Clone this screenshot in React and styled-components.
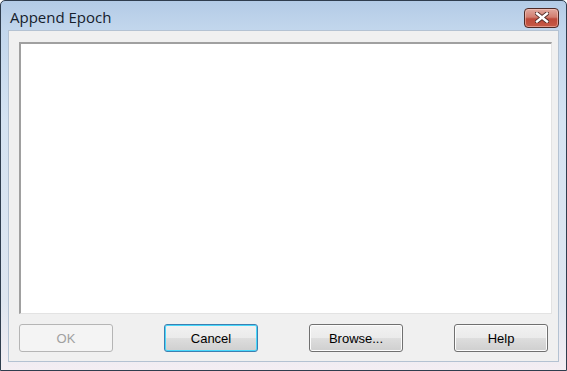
import React from "react";
import styled, { createGlobalStyle } from "styled-components";

const GlobalStyle = createGlobalStyle`
  html, body {
    margin: 0;
    padding: 0;
    background: #ffffff;
  }
`;

const Window = styled.div`
  box-sizing: border-box;
  width: 567px;
  height: 371px;
  display: flex;
  flex-direction: column;
  border: 1px solid #2f3d4e;
  border-radius: 5px 5px 0 0;
  background: linear-gradient(to bottom, #b3cbe6 0px, #c3d7ed 30px, #d5e3f2 120px, #dee6f0 300px, #f4eef3 371px);
  overflow: hidden;
`;

const TitleBar = styled.div`
  height: 29px;
  display: flex;
  align-items: center;
  justify-content: space-between;
  padding: 0 7px 0 9px;
`;

const Title = styled.span`
  font-family: "Open Sans", "Noto Sans", sans-serif;
  font-size: 15px;
  color: #15202c;
  margin-top: 2px;
`;

const CloseButton = styled.div`
  box-sizing: border-box;
  width: 35px;
  height: 20px;
  margin-top: 4px;
  border: 1px solid #4e2a26;
  border-radius: 4px;
  background: linear-gradient(to bottom, #e0a89e 0%, #d27e70 45%, #bd4a3a 55%, #c65a46 100%);
  box-shadow: inset 0 0 0 1px rgba(255, 210, 200, 0.5);
  display: flex;
  align-items: center;
  justify-content: center;
`;

const Client = styled.div`
  flex: 1;
  margin: 0 7px 8px 7px;
  background: #f0f0f0;
  border: 1px solid #b4c2d2;
  display: flex;
  flex-direction: column;
  padding: 11px 6px 0 10px;
`;

const Well = styled.div`
  box-sizing: border-box;
  height: 272px;
  background: #ffffff;
  border-top: 2px solid #a0a0a0;
  border-left: 2px solid #a0a0a0;
  border-right: 1px solid #e3e3e3;
  border-bottom: 1px solid #e3e3e3;
`;

const ButtonRow = styled.div`
  display: flex;
  justify-content: space-between;
  margin-top: 10px;
  padding-right: 4px;
`;

const Button = styled.button`
  box-sizing: border-box;
  width: 94px;
  height: 28px;
  border-radius: 3px;
  border: 1px solid ${(p) => (p.$default ? "#3c7fb1" : p.disabled ? "#b5b5b5" : "#707070")};
  background: ${(p) =>
    p.disabled
      ? "#f4f4f4"
      : "linear-gradient(to bottom, #f2f2f2 0%, #ebebeb 48%, #dddddd 52%, #cfcfcf 100%)"};
  box-shadow: ${(p) =>
    p.$default
      ? "inset 0 0 0 1px #48d8fb"
      : p.disabled
      ? "none"
      : "inset 0 0 0 1px #fcfcfc"};
  font-family: "Liberation Sans", Arial, sans-serif;
  font-size: 13px;
  color: ${(p) => (p.disabled ? "#a0a0a0" : "#000000")};
  padding: 0;
`;

export default function App() {
  return (
    <>
      <GlobalStyle />
      <Window>
        <TitleBar>
          <Title>Append Epoch</Title>
          <CloseButton>
            <svg width="14" height="11" viewBox="0 0 14 11">
              <path
                d="M2 1.5 L12 9.5 M12 1.5 L2 9.5"
                stroke="#4e2a26"
                strokeWidth="4.2"
                strokeLinecap="square"
              />
              <path
                d="M2 1.5 L12 9.5 M12 1.5 L2 9.5"
                stroke="#ffffff"
                strokeWidth="2.4"
                strokeLinecap="square"
              />
            </svg>
          </CloseButton>
        </TitleBar>
        <Client>
          <Well />
          <ButtonRow>
            <Button disabled>OK</Button>
            <Button $default>Cancel</Button>
            <Button>Browse...</Button>
            <Button>Help</Button>
          </ButtonRow>
        </Client>
      </Window>
    </>
  );
}
